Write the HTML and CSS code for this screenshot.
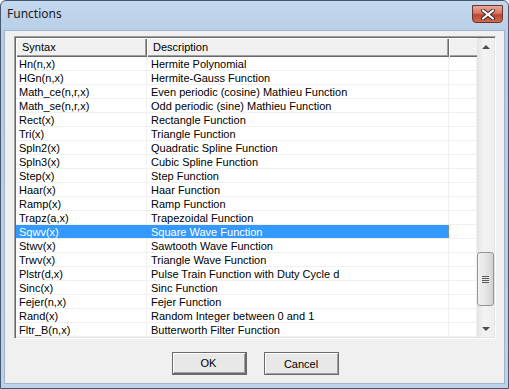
FILE: index.html
```html
<!DOCTYPE html>
<html>

<head>
    <meta name="viewport" content="width=device-width, initial-scale=1.0">
    <link rel="stylesheet" href="styles.css">
</head>

<body>
    <div class="window">
        <div class="titlebar">
            <span class="title">Functions</span>
            <div class="close">
                <svg width="16" height="11" viewBox="0 0 16 11">
                    <path d="M3 1.5 L13 9.5 M13 1.5 L3 9.5" stroke="#3c2a2a" stroke-width="4" stroke-linecap="round"/>
                    <path d="M3 1.5 L13 9.5 M13 1.5 L3 9.5" stroke="#ffffff" stroke-width="2.2" stroke-linecap="round"/>
                </svg>
            </div>
        </div>

        <div class="client">
            <div class="listbox">
                <div class="list">
                    <div class="head">
                        <div class="hcell">Syntax</div>
                        <div class="hcell">Description</div>
                        <div class="hcell last"></div>
                    </div>
                    <div class="rows" id="rows"></div>
                </div>
                <div class="scrollbar">
                    <div class="arrow up"></div>
                    <div class="track">
                        <div class="thumb">
                            <div class="grip"></div>
                        </div>
                    </div>
                    <div class="arrow down"></div>
                </div>
            </div>

            <div class="buttons">
                <button class="btn default">OK</button>
                <button class="btn">Cancel</button>
            </div>
        </div>
    </div>

    <script>
        var items = [
            ["Hn(n,x)", "Hermite Polynomial"],
            ["HGn(n,x)", "Hermite-Gauss Function"],
            ["Math_ce(n,r,x)", "Even periodic (cosine) Mathieu Function"],
            ["Math_se(n,r,x)", "Odd periodic (sine) Mathieu Function"],
            ["Rect(x)", "Rectangle Function"],
            ["Tri(x)", "Triangle Function"],
            ["Spln2(x)", "Quadratic Spline Function"],
            ["Spln3(x)", "Cubic Spline Function"],
            ["Step(x)", "Step Function"],
            ["Haar(x)", "Haar Function"],
            ["Ramp(x)", "Ramp Function"],
            ["Trapz(a,x)", "Trapezoidal Function"],
            ["Sqwv(x)", "Square Wave Function"],
            ["Stwv(x)", "Sawtooth Wave Function"],
            ["Trwv(x)", "Triangle Wave Function"],
            ["Plstr(d,x)", "Pulse Train Function with Duty Cycle d"],
            ["Sinc(x)", "Sinc Function"],
            ["Fejer(n,x)", "Fejer Function"],
            ["Rand(x)", "Random Integer between 0 and 1"],
            ["Fltr_B(n,x)", "Butterworth Filter Function"]
        ];

        var html = "";
        for (i = 0; i < items.length; i++) {
            var cls = items[i][0] == "Sqwv(x)" ? "row selected" : "row";
            html += '<div class="' + cls + '">' +
                '<div class="cell">' + items[i][0] + '</div>' +
                '<div class="cell desc">' + items[i][1] + '</div>' +
                '<div class="cell"></div></div>';
        }
        document.getElementById("rows").innerHTML = html;
    </script>
</body>

</html>
```

FILE: styles.css
```css
body {
    margin: 0;
    background-color: white;
    font-family: "Liberation Sans", Arial, sans-serif;
}

.window {
    width: 509px;
    height: 389px;
    box-sizing: border-box;
    border: 1px solid #47586e;
    border-radius: 6px 6px 0 0;
    background: linear-gradient(#c4d8ee, #b4cce6 40px, #bcd2ea);
    display: flex;
    flex-direction: column;
}

.titlebar {
    height: 29px;
    display: flex;
    align-items: flex-start;
    justify-content: space-between;
}

.title {
    font-family: "Noto Sans", "Open Sans", sans-serif;
    font-size: 12px;
    color: #1b1b1b;
    margin: 4px 0 0 6px;
}

.close {
    width: 29px;
    height: 16px;
    margin: 4px 5px 0 0;
    border: 1px solid #6e3328;
    border-radius: 0 0 4px 4px;
    background: linear-gradient(#e9a99b, #d47768 45%, #c0432e 55%, #d06a50);
    display: flex;
    align-items: center;
    justify-content: center;
}

.client {
    flex: 1;
    margin: 0 3px 4px 3px;
    background-color: #f0f0f0;
    border: 1px solid #9fb4cc;
    display: flex;
    flex-direction: column;
}

.listbox {
    width: 482px;
    height: 303px;
    box-sizing: border-box;
    margin: 5px 0 0 9px;
    border-top: 1px solid #a0a0a0;
    border-left: 1px solid #a0a0a0;
    border-right: 1px solid #ffffff;
    border-bottom: 1px solid #ffffff;
    box-shadow: inset 1px 1px #696969, inset -1px -1px #e3e3e3;
    padding: 1px;
    background-color: white;
    display: flex;
}

.list {
    width: 461px;
    font-size: 11px;
}

.head,
.row {
    display: grid;
    grid-template-columns: 131px 302px 28px;
}

.head {
    height: 19px;
}

.hcell {
    background-color: #f0f0f0;
    box-shadow: inset 1px 1px #ffffff, inset -1px -1px #696969, inset -2px -2px #a0a0a0;
    padding: 3px 0 0 6px;
    line-height: 13px;
}

.hcell.last {
    box-shadow: inset 1px 1px #ffffff, inset 0 -1px #696969, inset 0 -2px #a0a0a0;
}

.row {
    height: 14px;
    box-sizing: border-box;
    border-bottom: 1px solid #f0f0f0;
}

.cell {
    height: 13px;
    box-sizing: border-box;
    border-right: 1px solid #f0f0f0;
    padding: 2px 0 0 3px;
    line-height: 11px;
    white-space: nowrap;
}

.cell.desc {
    padding-left: 4px;
}

.row.selected .cell:nth-child(1),
.row.selected .cell:nth-child(2) {
    background-color: #3399ff;
    border-right-color: #3399ff;
    color: white;
}

.row.selected .cell:nth-child(2) {
    border-right: 1px dotted #c08a4a;
}

.scrollbar {
    width: 17px;
    display: flex;
    flex-direction: column;
    background: linear-gradient(to right, #e3e3e3, #f3f3f3 40%, #eeeeee);
}

.arrow {
    height: 17px;
    display: flex;
    align-items: center;
    justify-content: center;
}

.arrow::after {
    content: "";
    border-left: 4px solid transparent;
    border-right: 4px solid transparent;
}

.arrow.up::after {
    border-bottom: 4px solid #4d4d4d;
}

.arrow.down::after {
    border-top: 4px solid #4d4d4d;
}

.track {
    flex: 1;
    position: relative;
}

.thumb {
    position: absolute;
    left: 0;
    top: 197px;
    width: 15px;
    height: 52px;
    border: 1px solid #959595;
    border-radius: 3px;
    background: linear-gradient(to right, #f1f1f1, #e6e6e6 50%, #d2d2d2);
    display: flex;
    align-items: center;
    justify-content: center;
}

.grip {
    width: 7px;
    height: 7px;
    background: repeating-linear-gradient(#5a5a5a 0, #5a5a5a 1px, #e8e8e8 1px, #e8e8e8 2px);
}

.buttons {
    display: flex;
    justify-content: center;
    gap: 17px;
    margin-top: 13px;
    margin-left: 1px;
}

.btn {
    width: 75px;
    height: 23px;
    font-family: "Liberation Sans", Arial, sans-serif;
    font-size: 11px;
    color: black;
    background-color: #e8e8e8;
    border: 1px solid #6a6a6a;
    box-shadow: inset 1px 1px #ffffff, inset -1px -1px #a0a0a0;
    padding: 0;
}

.btn.default {
    border-width: 1px 2px 2px 1px;
}
```
